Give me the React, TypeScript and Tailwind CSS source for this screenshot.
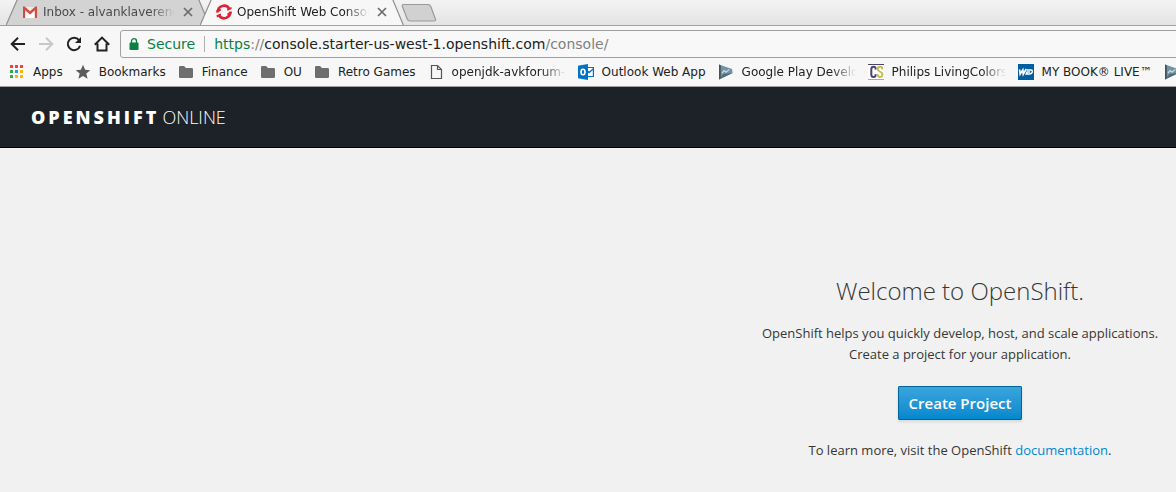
import type { ReactNode } from "react";

function CloseIcon() {
  return (
    <svg width="10" height="10" viewBox="0 0 10 10" fill="none" stroke="#6b6b6b" strokeWidth="1.7">
      <path d="M1 1l8 8M9 1L1 9" />
    </svg>
  );
}

function GmailIcon() {
  return (
    <svg width="16" height="16" viewBox="0 0 16 16" className="shrink-0">
      <path d="M1.5 3h13v11h-13z" fill="#eceaea" />
      <path d="M3 14V7l5 4 5-4v7z" fill="#fff" />
      <path d="M1 2.500h1.600L8 7.200l5.400-4.700H15V14h-2.200V6.200L8 10.400 3.200 6.200V14H1z" fill="#d54b3d" />
    </svg>
  );
}

function OpenShiftIcon() {
  return (
    <svg width="16" height="16" viewBox="0 0 16 16" className="shrink-0">
      <g fill="none" stroke="#dd2233" strokeWidth="2.6">
        <path d="M1.900 8.400A6.100 6.100 0 0 1 13 4.400" />
        <path d="M14.100 7.600A6.100 6.100 0 0 1 3 11.600" />
      </g>
      <path d="M.2 6.600l4.600-1.800v2L.4 8.800zM10.800 5l4.800-2v2L11.600 6.800zM.4 11.200L5 9.400v2L1 13.400zM11.400 9.200L15.800 7.400v2l-4.400 1.800z" fill="#dd2233" />
    </svg>
  );
}

function FolderIcon() {
  return (
    <svg width="16" height="16" viewBox="0 0 16 16" className="shrink-0" fill="#6e6e6e">
      <path d="M1 3.300Q1 2 2.300 2H6l2 2h5.700Q15 4 15 5.300v7.400Q15 14 13.700 14H2.300Q1 14 1 12.700z" />
    </svg>
  );
}

function AppsIcon() {
  const colors = ["#f44336", "#f44336", "#f44336", "#34a853", "#2196f3", "#fbb400", "#34a853", "#fbb400", "#fbb400"];
  return (
    <svg width="16" height="16" viewBox="0 0 16 16" className="shrink-0">
      {colors.map((c, i) => (
        <rect key={i} x={1 + (i % 3) * 5} y={1 + Math.floor(i / 3) * 5} width="3" height="3" fill={c} />
      ))}
    </svg>
  );
}

function StarIcon() {
  return (
    <svg width="16" height="16" viewBox="0 0 16 16" className="shrink-0" fill="#5a5a5a">
      <path d="M8 .8l2.100 5 5.200.4-4 3.400 1.300 5.200L8 12l-4.600 2.800 1.300-5.200-4-3.400 5.200-.4z" />
    </svg>
  );
}

function FileIcon() {
  return (
    <svg width="16" height="16" viewBox="0 0 16 16" className="shrink-0" fill="none" stroke="#555" strokeWidth="1.2">
      <path d="M3.500 1.500h6l4 4v9h-10zM9.500 1.500v4h4" />
    </svg>
  );
}

function OutlookIcon() {
  return (
    <svg width="16" height="16" viewBox="0 0 16 16" className="shrink-0">
      <path d="M9 3.500h6.400v9H9" fill="#fff" stroke="#0072c6" strokeWidth="1.2" />
      <path d="M9 6.600l2 2 4.200-3.600" fill="none" stroke="#0072c6" strokeWidth="1.4" />
      <path d="M0 1.800L10 0v16L0 14.200z" fill="#0072c6" />
      <ellipse cx="5" cy="8" rx="2" ry="2.700" fill="none" stroke="#fff" strokeWidth="1.6" />
    </svg>
  );
}

function PlayConsoleIcon() {
  return (
    <svg width="16" height="16" viewBox="0 0 16 16" className="shrink-0">
      <path d="M1 .5L14 5l.6 4L1 15.500z" fill="#7393a2" />
      <path d="M1 .5l1.800.7v13.400L1 15.500z" fill="#41535e" />
      <path d="M1 15.500l4.500-5.500 9.100-1z" fill="#506a78" />
      <path d="M4 9l2.200-2.400 1.800 1.600 3.400-2.800" fill="none" stroke="#c5dbe4" strokeWidth="1.2" />
    </svg>
  );
}

function CsIcon() {
  return (
    <svg width="16" height="16" viewBox="0 0 16 16" className="shrink-0">
      <path d="M0 0h16v16H0z" fill="#fff" />
      <path d="M0 0h16v1H0z" fill="#4a456c" />
      <path d="M0 15h16v1H0z" fill="#b7b534" />
      <path d="M7.600 5.500V4.500Q7.500 2.800 5.700 2.800 3.300 2.800 3.300 5.200v5.300Q3.300 13 5.700 13q1.800 0 1.900-1.700v-1" fill="none" stroke="#4a456c" strokeWidth="2" />
      <path d="M14.200 5.500V4.600q-.1-1.800-2.200-1.800-2.200 0-2.200 2.200 0 1.700 2.200 2.600 2.400.9 2.400 2.900Q14.400 13 12 13q-2.300 0-2.300-2.700" fill="none" stroke="#c3c052" strokeWidth="2" />
    </svg>
  );
}

function WdIcon() {
  return (
    <svg width="16" height="16" viewBox="0 0 16 16" className="shrink-0">
      <path d="M0 0h16v16H0z" fill="#005d9f" />
      <path d="M1.600 5.500l.6 4.500 2.600-4 .5 4 3-5" fill="none" stroke="#fff" strokeWidth="1.8" />
      <path d="M9 6h4q1.800.2 1.300 2-.5 1.800-2.500 2H8.200l.9-2h3" fill="none" stroke="#fff" strokeWidth="1.5" />
    </svg>
  );
}

const FADE = "[mask-image:linear-gradient(to_right,black_calc(100%_-_24px),transparent)]";

function Bookmark({ icon, label, width = "", fade = false }: { icon: ReactNode; label: string; width?: string; fade?: boolean }) {
  return (
    <a href="#" className="flex shrink-0 items-center gap-2">
      {icon}
      <span className={`overflow-hidden whitespace-nowrap ${width} ${fade ? FADE : ""}`}>{label}</span>
    </a>
  );
}

function Tab({ icon, label, active = false }: { icon: ReactNode; label: string; active?: boolean }) {
  return (
    <div className={`relative flex h-[26px] w-[210px] shrink-0 pl-4 ${active ? "z-10 -ml-[16px]" : ""}`}>
      <svg className="absolute inset-0" width="210" height="26" viewBox="0 0 210 26">
        <path d="M0 26L11.500 -1H192.500L204 26z" fill={active ? "#f7f7f7" : "#d3d3d3"} />
        <path d="M0 25.500L11.500 -1M192.500 -1L203.500 25.500" fill="none" stroke="#8f8f8f" strokeWidth="1.200" />
        {!active && <path d="M0 25.500H204" stroke="#a0a0a0" />}
      </svg>
      <div className="relative flex h-6 items-center">
        {icon}
        <button type="button" className={`ml-[5px] w-[132px] overflow-hidden text-left whitespace-nowrap ${FADE} ${active ? "text-[#222]" : "text-[#4a4a4a]"}`}>
          {label}
        </button>
        <button type="button" aria-label="Close tab" className="ml-2">
          <CloseIcon />
        </button>
      </div>
    </div>
  );
}

export default function App() {
  return (
    <div className="min-h-screen overflow-hidden bg-[#f1f1f1] font-['Open_Sans',sans-serif] text-[13px] text-[#363636]">
      <div className="bg-[#f7f7f7] font-['DejaVu_Sans',sans-serif] text-xs text-[#222]">
        <div className="flex h-[26px] overflow-hidden border-b border-[#a0a0a0] bg-linear-to-b from-[#f3f3f3] to-[#e4e4e4] pl-[6px]">
          <Tab icon={<GmailIcon />} label="Inbox - alvanklaverend" />
          <Tab icon={<OpenShiftIcon />} label="OpenShift Web Consol" active />
          <button type="button" aria-label="New tab" className="-ml-[9px] h-[25px] shrink-0">
            <svg width="36" height="25" viewBox="0 0 36 25">
              <path d="M2.500 4.500H27q2 0 2.800 2l4.600 12.500q.8 2-1.400 2H9q-2 0-2.800-2L1.400 6.500q-.6-2 1.100-2z" fill="#d1d1d1" stroke="#9a9a9a" strokeWidth="1.200" />
            </svg>
          </button>
        </div>

        <div className="flex h-[34px] items-center pt-[2px] pl-[10px]">
          <nav className="flex shrink-0 gap-3" aria-label="Browser">
            <button type="button" aria-label="Back">
              <svg width="16" height="16" viewBox="0 0 16 16" fill="none" stroke="#222" strokeWidth="2"><path d="M15 8H2M8 1.700L1.700 8 8 14.300" /></svg>
            </button>
            <button type="button" aria-label="Forward">
              <svg width="16" height="16" viewBox="0 0 16 16" fill="none" stroke="#c8c8c8" strokeWidth="2"><path d="M1 8h13M8 1.700L14.300 8 8 14.300" /></svg>
            </button>
            <button type="button" aria-label="Reload">
              <svg width="16" height="16" viewBox="0 0 16 16"><path d="M13 4.200A6.200 6.200 0 1 0 14 9.700" fill="none" stroke="#222" strokeWidth="2" /><path d="M15 1v6H9z" fill="#222" /></svg>
            </button>
            <button type="button" aria-label="Home">
              <svg width="16" height="16" viewBox="0 0 16 16" fill="none" stroke="#222" strokeWidth="2"><path d="M.8 8.800L8 1.600l7.200 7.200M3.500 7.500v7h9v-7" /></svg>
            </button>
          </nav>
          <div className="-mr-1 ml-[10px] flex h-7 min-w-0 flex-1 items-center rounded-[3px] border border-[#a0a0a0] bg-[#f8f8f8] pl-2 text-sm">
            <svg width="10" height="12" viewBox="0 0 10 12" fill="#0b8043"><path d="M1.500 4.500h7q1 0 1 1V11q0 1-1 1h-7q-1 0-1-1V5.500q0-1 1-1z" /><path d="M2.500 5V3.200a2.500 2.500 0 0 1 5 0V5" fill="none" stroke="#0b8043" strokeWidth="1.300" /></svg>
            <span className="ml-2 text-[#0b8043]">Secure</span>
            <span className="mx-[9px] h-4 border-l border-[#b0b0b0]" />
            <span className="whitespace-nowrap"><span className="text-[#0b8043]">https</span><span className="text-[#808080]">://</span>console.starter-us-west-1.openshift.com<span className="text-[#808080]">/console/</span></span>
          </div>
        </div>

        <nav aria-label="Bookmarks" className="flex h-[27px] items-center gap-3 overflow-hidden border-b border-[#a0a0a0] pb-[2px] pl-[9px]">
          <Bookmark icon={<AppsIcon />} label="Apps" />
          <Bookmark icon={<StarIcon />} label="Bookmarks" />
          <Bookmark icon={<FolderIcon />} label="Finance" />
          <Bookmark icon={<FolderIcon />} label="OU" />
          <Bookmark icon={<FolderIcon />} label="Retro Games" />
          <Bookmark icon={<FileIcon />} label="openjdk-avkforum-" width="w-[114px]" fade />
          <Bookmark icon={<OutlookIcon />} label="Outlook Web App" />
          <Bookmark icon={<PlayConsoleIcon />} label="Google Play Develo" width="w-[114px]" fade />
          <Bookmark icon={<CsIcon />} label="Philips LivingColors" width="w-[114px]" fade />
          <Bookmark icon={<WdIcon />} label="MY BOOK® LIVE™" />
          <a href="#" aria-label="Google Play" className="shrink-0"><PlayConsoleIcon /></a>
        </nav>
      </div>

      <header className="flex h-[61px] items-center border-b border-black bg-[#1d2128] pl-[31px] text-lg text-white">
        <span className="font-extrabold tracking-[3px]">OPENSHIFT</span>
        <span className="ml-[3px] font-light">ONLINE</span>
      </header>

      <main className="flex flex-col items-center pt-[127px] pl-[744px] text-center">
        <h1 className="text-2xl leading-8 font-light whitespace-nowrap">Welcome to OpenShift.</h1>
        <p className="mt-4 leading-[21px] whitespace-nowrap">
          OpenShift helps you quickly develop, host, and scale applications.
          <br />
          Create a project for your application.
        </p>
        <button type="button" className="mt-[21px] h-[34px] rounded-[1px] border border-[#00659c] bg-linear-to-b from-[#39a5dc] to-[#0088ce] px-[10px] text-[15px] font-semibold whitespace-nowrap text-white shadow-[0_2px_3px_rgba(3,3,3,0.1)]">
          Create Project
        </button>
        <p className="mt-5 leading-[21px] whitespace-nowrap">
          To learn more, visit the OpenShift <a href="#" className="text-[#0088ce]">documentation</a>.
        </p>
      </main>
    </div>
  );
}
